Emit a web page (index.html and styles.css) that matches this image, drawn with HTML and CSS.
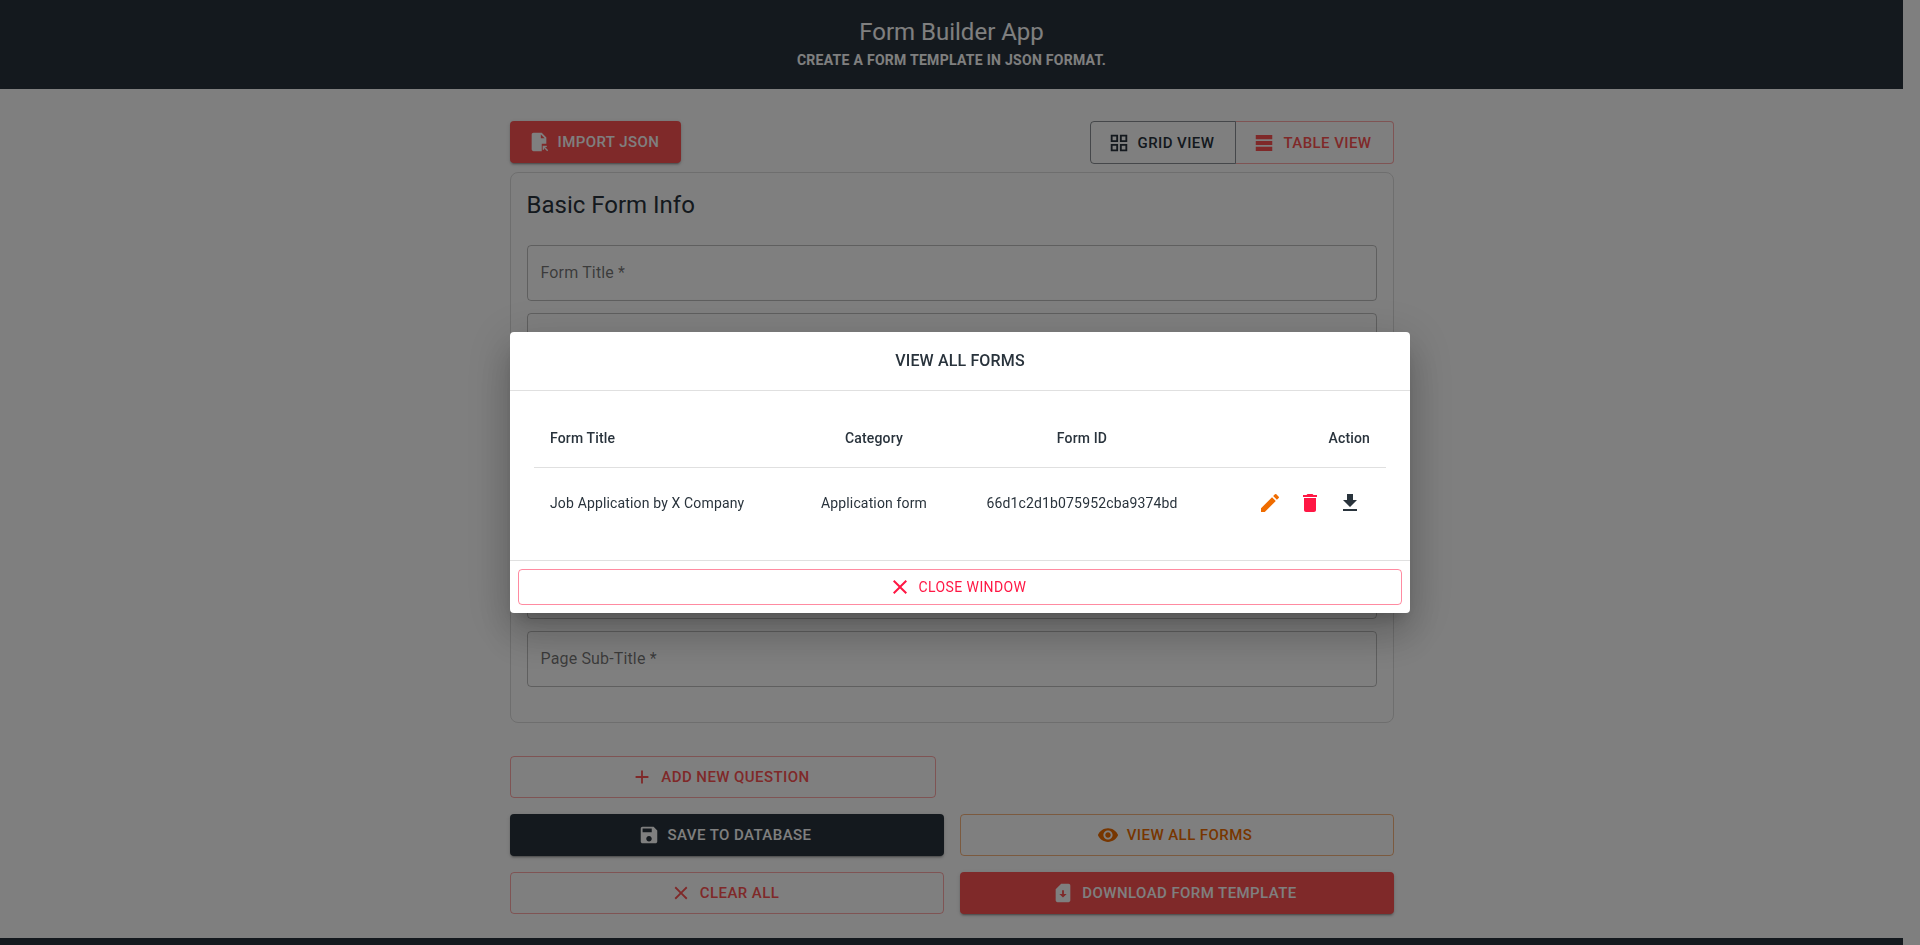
FILE: index.html
```html
<!doctype html>
<html lang="en">
  <head>
    <meta charset="UTF-8" />
    <meta name="viewport" content="width=device-width, initial-scale=1.0" />
    <title>Form Builder App</title>
    <link rel="stylesheet" href="styles.css">
  </head>
  <body>
    <div class="page">
      <header class="header">
        <h1>Form Builder App</h1>
        <p>Create a form template in JSON format.</p>
      </header>

      <main class="container">
        <div class="top-row">
          <button class="btn btn-red">
            <svg class="icon" viewBox="0 0 24 24"><path fill-rule="evenodd" d="M15 2H6c-1.1 0-2 .9-2 2v16c0 1.1.89 2 1.99 2H15v-8h5V7l-5-5zm-1 1.8V8h4.2L14 3.8z"/><path d="M16 16h4.5v1.5h-1.9l3.4 3.4-1.1 1.1-3.4-3.4v1.9H16z"/></svg>
            Import JSON
          </button>
          <div class="toggle">
            <button class="btn toggle-btn toggle-active">
              <svg class="icon" viewBox="0 0 24 24"><path d="M3 3v8h8V3H3zm6 6H5V5h4v4zm-6 4v8h8v-8H3zm6 6H5v-4h4v4zm4-16v8h8V3h-8zm6 6h-4V5h4v4zm-6 4v8h8v-8h-8zm6 6h-4v-4h4v4z"/></svg>
              Grid View
            </button>
            <button class="btn toggle-btn toggle-red">
              <svg class="icon" viewBox="0 0 24 24"><path d="M21 7.9H3V3.4h18v4.5zm0 1.85H3v4.5h18v-4.5zm0 6.35H3v4.5h18v-4.5z"/></svg>
              Table View
            </button>
          </div>
        </div>

        <section class="card">
          <h2>Basic Form Info</h2>
          <div class="field">Form Title *</div>
          <div class="field">Form Description *</div>
          <div class="field field-tall">Form Instructions *</div>
          <div class="field">Page Title *</div>
          <div class="field">Page Sub-Title *</div>
        </section>

        <div class="add-row">
          <button class="btn btn-outline-red">
            <svg class="icon" viewBox="0 0 24 24"><path d="M19 13h-6v6h-2v-6H5v-2h6V5h2v6h6v2z"/></svg>
            Add New Question
          </button>
        </div>

        <div class="actions">
          <button class="btn btn-dark">
            <svg class="icon" viewBox="0 0 24 24"><path d="M17 3H5c-1.11 0-2 .9-2 2v14c0 1.1.89 2 2 2h14c1.1 0 2-.9 2-2V7l-4-4zm-5 16c-1.66 0-3-1.34-3-3s1.34-3 3-3 3 1.34 3 3-1.34 3-3 3zm3-10H5V5h10v4z"/></svg>
            Save to Database
          </button>
          <button class="btn btn-outline-orange">
            <svg class="icon" viewBox="0 0 24 24"><path d="M12 4.5C7 4.5 2.73 7.61 1 12c1.73 4.39 6 7.5 11 7.5s9.27-3.11 11-7.5c-1.73-4.39-6-7.5-11-7.5zM12 17c-2.76 0-5-2.24-5-5s2.24-5 5-5 5 2.24 5 5-2.24 5-5 5zm0-8c-1.66 0-3 1.34-3 3s1.34 3 3 3 3-1.34 3-3-1.34-3-3-3z"/></svg>
            View All Forms
          </button>
          <button class="btn btn-outline-red">
            <svg class="icon" viewBox="0 0 24 24"><path d="M19 6.41 17.59 5 12 10.59 6.41 5 5 6.41 10.59 12 5 17.59 6.41 19 12 13.41 17.59 19 19 17.59 13.41 12z"/></svg>
            Clear All
          </button>
          <button class="btn btn-red">
            <svg class="icon" viewBox="0 0 24 24"><path d="M18 2h-8L4 8v12c0 1.1.9 2 2 2h12c1.1 0 2-.9 2-2V4c0-1.1-.9-2-2-2zm-6 15-4-4h3V9.02L13 9v4h3l-4 4z"/></svg>
            Download Form Template
          </button>
        </div>
      </main>

      <footer class="footer"></footer>
    </div>

    <div class="overlay">
      <div class="dialog">
        <div class="dialog-title">View All Forms</div>
        <div class="dialog-content">
          <table class="forms-table">
            <thead>
              <tr>
                <th class="col-title">Form Title</th>
                <th>Category</th>
                <th>Form ID</th>
                <th class="col-action">Action</th>
              </tr>
            </thead>
            <tbody>
              <tr>
                <td class="col-title">Job Application by X Company</td>
                <td>Application form</td>
                <td>66d1c2d1b075952cba9374bd</td>
                <td class="col-action">
                  <div class="row-icons">
                    <svg class="icon icon-orange" viewBox="0 0 24 24"><path d="M3 17.25V21h3.75L17.81 9.94l-3.75-3.75L3 17.25zM20.71 7.04c.39-.39.39-1.02 0-1.41l-2.34-2.34a.9959.9959 0 0 0-1.41 0l-1.83 1.83 3.75 3.75 1.83-1.83z"/></svg>
                    <svg class="icon icon-pink" viewBox="0 0 24 24"><path d="M6 19c0 1.1.9 2 2 2h8c1.1 0 2-.9 2-2V7H6v12zM19 4h-3.5l-1-1h-5l-1 1H5v2h14V4z"/></svg>
                    <svg class="icon icon-dark" viewBox="0 0 24 24"><path d="M19 9h-4V3H9v6H5l7 7 7-7zM5 18v2h14v-2H5z"/></svg>
                  </div>
                </td>
              </tr>
            </tbody>
          </table>
        </div>
        <div class="dialog-actions">
          <button class="btn btn-close">
            <svg class="icon" viewBox="0 0 24 24"><path d="M19 6.41 17.59 5 12 10.59 6.41 5 5 6.41 10.59 12 5 17.59 6.41 19 12 13.41 17.59 19 19 17.59 13.41 12z"/></svg>
            Close Window
          </button>
        </div>
      </div>
    </div>
  </body>
</html>
```

FILE: styles.css
```css
* {
  box-sizing: border-box;
}
html,
body {
  margin: 0;
  height: 100%;
  overflow: hidden;
}
body {
  font-family: Roboto, "Liberation Sans", sans-serif;
  background: #fff;
  color: #29333c;
}
.page {
  width: 1903px;
}
.header {
  height: 89px;
  background: #29333c;
  color: #fff;
  text-align: center;
  padding-top: 16px;
}
.header h1 {
  margin: 0;
  font-size: 24px;
  font-weight: 400;
  line-height: 32px;
}
.header p {
  margin: 2px 0 0;
  font-size: 14px;
  font-weight: 700;
  line-height: 21px;
  text-transform: uppercase;
  letter-spacing: 0.28px;
}
.container {
  width: 884px;
  margin: 0 auto;
  padding-top: 32px;
}
.top-row {
  display: flex;
  justify-content: space-between;
  margin-bottom: 8px;
}
.btn {
  display: flex;
  align-items: center;
  justify-content: center;
  gap: 8px;
  height: 42px;
  padding: 0 21px;
  border: 1px solid transparent;
  border-radius: 4px;
  background: none;
  font-family: inherit;
  font-size: 15px;
  font-weight: 500;
  letter-spacing: 0.43px;
  text-transform: uppercase;
  cursor: pointer;
}
.icon {
  width: 22px;
  height: 22px;
  margin-left: -4px;
  fill: currentColor;
  flex-shrink: 0;
}
.btn-red {
  background: #ff5252;
  color: #fff;
  box-shadow: 0 3px 1px -2px rgba(0, 0, 0, 0.2), 0 2px 2px rgba(0, 0, 0, 0.14), 0 1px 5px rgba(0, 0, 0, 0.12);
}
.btn-dark {
  background: #29333c;
  color: #fff;
  box-shadow: 0 3px 1px -2px rgba(0, 0, 0, 0.2), 0 2px 2px rgba(0, 0, 0, 0.14), 0 1px 5px rgba(0, 0, 0, 0.12);
}
.btn-outline-red {
  border-color: rgba(255, 82, 82, 0.5);
  color: #ff5252;
}
.btn-outline-orange {
  border-color: rgba(239, 108, 0, 0.5);
  color: #ef6c00;
}
.toggle {
  display: flex;
}
.toggle-btn {
  height: 43px;
}
.toggle-active {
  gap: 7px;
  border-color: rgba(41, 51, 60, 0.55);
  border-radius: 4px 0 0 4px;
  color: #29333c;
}
.toggle-red {
  border-color: rgba(255, 82, 82, 0.5);
  border-left: 0;
  border-radius: 0 4px 4px 0;
  color: #ff5252;
}
.card {
  height: 551px;
  padding: 16px;
  border: 1px solid #ddd;
  border-radius: 8px;
}
.card h2 {
  margin: 0 0 24px;
  font-size: 24px;
  font-weight: 400;
  line-height: 32px;
}
.field {
  height: 56px;
  margin-bottom: 12px;
  padding: 15px 13px 0;
  border: 1px solid rgba(0, 0, 0, 0.25);
  border-radius: 4px;
  font-size: 16px;
  line-height: 24px;
  letter-spacing: 0.15px;
  color: rgba(0, 0, 0, 0.55);
}
.field-tall {
  height: 170px;
}
.add-row {
  margin-top: 33px;
  width: 426px;
}
.add-row .btn {
  width: 100%;
}
.actions {
  display: grid;
  grid-template-columns: 1fr 1fr;
  gap: 16px;
  margin-top: 16px;
}
.footer {
  height: 40px;
  margin-top: 24px;
  background: #29333c;
}
.overlay {
  position: fixed;
  inset: 0;
  display: flex;
  align-items: center;
  justify-content: center;
  background: rgba(0, 0, 0, 0.5);
}
.dialog {
  width: 900px;
  background: #fff;
  border-radius: 4px;
  box-shadow: 0 11px 15px -7px rgba(0, 0, 0, 0.2), 0 24px 38px 3px rgba(0, 0, 0, 0.14), 0 9px 46px 8px rgba(0, 0, 0, 0.12);
}
.dialog-title {
  height: 59px;
  border-bottom: 1px solid #e0e0e0;
  text-align: center;
  font-size: 16px;
  font-weight: 500;
  line-height: 58px;
  letter-spacing: 0.15px;
  text-transform: uppercase;
}
.dialog-content {
  height: 169px;
  padding: 19px 24px;
}
.forms-table {
  width: 100%;
  border-collapse: collapse;
  table-layout: fixed;
  font-size: 14px;
}
.forms-table th,
.forms-table td {
  padding: 0 16px;
  text-align: center;
  letter-spacing: 0.15px;
}
.forms-table th {
  height: 57px;
  font-weight: 500;
  border-bottom: 1px solid #e0e0e0;
}
.forms-table td {
  height: 72px;
  white-space: nowrap;
}
.forms-table th:nth-child(1) {
  width: 244px;
}
.forms-table th:nth-child(2) {
  width: 192px;
}
.forms-table th:nth-child(3) {
  width: 224px;
}
.forms-table .col-title {
  text-align: left;
}
.forms-table .col-action {
  text-align: right;
}
.row-icons {
  display: flex;
  justify-content: flex-end;
  gap: 16px;
  padding-right: 8px;
}
.row-icons .icon {
  width: 24px;
  height: 24px;
  margin-left: 0;
}
.icon-orange {
  color: #ef6c00;
}
.icon-pink {
  color: #ff1744;
}
.icon-dark {
  color: #29333c;
}
.dialog-actions {
  padding: 8px;
  border-top: 1px solid #e0e0e0;
}
.btn-close {
  width: 100%;
  height: 36px;
  gap: 7px;
  padding: 0 23px 0 21px;
  border-color: rgba(255, 23, 68, 0.5);
  color: #ff1744;
  font-size: 14px;
  font-weight: 400;
  letter-spacing: 0.4px;
}
.btn-close .icon {
  width: 24px;
  height: 24px;
}
```
